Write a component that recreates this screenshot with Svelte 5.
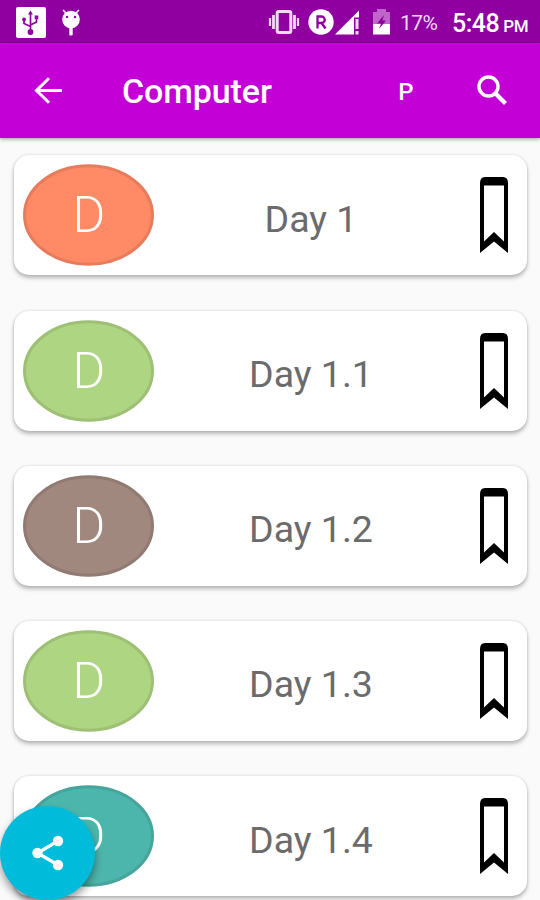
<script>
	const days = [
		{ name: 'Day 1', color: '#ff8a65', edge: '#e67c5b' },
		{ name: 'Day 1.1', color: '#aed581', edge: '#9dc074' },
		{ name: 'Day 1.2', color: '#a1887f', edge: '#917a72' },
		{ name: 'Day 1.3', color: '#aed581', edge: '#9dc074' },
		{ name: 'Day 1.4', color: '#4db6ac', edge: '#45a49b' }
	];
</script>

<div class="screen">
	<div class="status">
		<svg class="usb" width="30" height="31" viewBox="0 0 30 31">
			<rect width="30" height="31" rx="2" fill="#fff" />
			<g fill="none" stroke="#9000a0" stroke-width="1.7">
				<path d="M14.500 25V6M14.500 19.500L8 16.500V12M14.500 18L20.500 15V10" />
			</g>
			<g fill="#9000a0">
				<circle cx="14.500" cy="25" r="2.900" />
				<path d="M14.500 3.500l2.500 4h-5z" />
				<circle cx="8" cy="12.500" r="1.900" />
				<rect x="18.700" y="8.500" width="3.600" height="3.600" />
			</g>
		</svg>
		<svg class="droid" width="20" height="27" viewBox="0 0 20 27">
			<path d="M2 1l4 4M18 1l-4 4" stroke="#fff" stroke-width="1.6" />
			<circle cx="10" cy="10.5" r="8.8" fill="#fff" />
			<rect x="8.3" y="18" width="3.4" height="8.5" rx="1" fill="#fff" />
			<circle cx="6" cy="8" r="1.2" fill="#9000a0" />
			<circle cx="14" cy="8" r="1.2" fill="#9000a0" />
		</svg>
		<svg class="vibrate" width="32" height="24" viewBox="0 0 32 24" fill="none" stroke="#f3d9f6">
			<rect x="9.2" y="1.500" width="13.6" height="21" rx="1.5" stroke-width="3" />
			<path d="M5.5 5v14M26.5 5v14" stroke-width="2.800" />
			<path d="M2 8v8M30 8v8" stroke-width="2.200" />
		</svg>
		<svg class="roaming" width="26" height="26" viewBox="0 0 26 26">
			<circle cx="13" cy="13" r="12.7" fill="#fff" />
			<path d="M9.500 19.500V7.500h4a3.200 3.200 0 0 1 0 6.500h-4M13.500 14l4 5.500" fill="none" stroke="#9000a0" stroke-width="2.300" />
		</svg>
		<svg class="signal" width="24" height="25" viewBox="0 0 24 25" fill="#fff">
			<path d="M0 24.5L24 .5V7.500h-5v17z" />
			<path d="M20.500 9h3v10h-3zM20.500 21h3v3.500h-3z" fill="#f3d9f6" />
		</svg>
		<svg class="battery" width="17" height="26" viewBox="0 0 17 26">
			<path d="M0 3h4V0h9v3h4v13H0z" fill="#c065ca" />
			<path d="M0 15h17v10.500H0z" fill="#fff" />
			<path d="M11 6L4 14.500h4L6 20l7-8.500H9.500z" fill="#9000a0" />
		</svg>
		<span class="percent">17%</span>
		<span class="clock">5:48<small>PM</small></span>
	</div>

	<header>
		<svg class="back" width="28" height="27" viewBox="0 0 28 27" fill="none" stroke="#fff" stroke-width="3">
			<path d="M15 1.200L2.500 13.500L15 25.800M2.500 13.500H28" />
		</svg>
		<h1>Computer</h1>
		<span class="action">P</span>
		<svg class="search" width="31" height="31" viewBox="0 0 31 31" fill="none" stroke="#fff">
			<circle cx="11.500" cy="11.500" r="9.500" stroke-width="3.400" />
			<path d="M18 18L28.500 28.500" stroke-width="4.200" />
		</svg>
	</header>

	<main>
		{#each days as day}
			<article>
				<svg class="avatar" width="131" height="102" viewBox="0 0 131 102">
					<ellipse cx="65.5" cy="51" rx="64" ry="49.200" fill={day.color} stroke={day.edge} stroke-width="3" />
					<text x="66" y="68" text-anchor="middle">D</text>
				</svg>
				<span class="name">{day.name}</span>
				<svg class="bookmark" width="28" height="76" viewBox="0 0 28 76">
					<path fill-rule="evenodd" d="M0 76V6Q0 0 5 0H23Q28 0 28 6V76L14 64.500zM4 8.500V64.500L14 55L24 64.500V8.500z" />
				</svg>
			</article>
		{/each}
	</main>

	<button class="fab" aria-label="Share">
		<svg width="32" height="36" viewBox="0 0 32 36" fill="#fff">
			<path d="M26 6L5.500 18L26 30" fill="none" stroke="#fff" stroke-width="3.200" />
			<circle cx="26" cy="6" r="5.200" />
			<circle cx="5.500" cy="18" r="5.200" />
			<circle cx="26" cy="30" r="5.200" />
		</svg>
	</button>
</div>

<style>
	:global(body) {
		overflow: hidden;
	}

	.screen {
		position: relative;
		overflow: hidden;
		width: 540px;
		height: 900px;
		background: #fafafa;
		font-family: Roboto, sans-serif;
	}

	.status {
		display: flex;
		align-items: center;
		height: 42.5px;
		padding: 2px 12px 0 16px;
		box-sizing: border-box;
		background: #9000a0;
		color: #fff;
		white-space: nowrap;
	}

	svg {
		display: block;
		flex: none;
	}

	.droid {
		margin-left: 15px;
	}

	.vibrate {
		margin-left: 187px;
	}

	.roaming {
		margin-left: 8px;
	}

	.signal {
		margin-left: 1px;
	}

	.battery {
		margin-left: 14px;
	}

	.percent {
		width: 38px;
		margin: 2px 0 0 10px;
		color: #f3d9f6;
		font-size: 21px;
		letter-spacing: -0.5px;
	}

	.clock {
		margin: 2px 0 0 auto;
		font-size: 25px;
		font-weight: 500;
		letter-spacing: -0.5px;
	}

	small {
		margin-left: 4px;
		font-size: 17px;
	}

	header {
		position: relative;
		display: flex;
		align-items: center;
		height: 95.5px;
		padding: 0 32px 0 34px;
		box-sizing: border-box;
		background: #c300d6;
		box-shadow: 0 1px 4px rgba(0, 0, 0, 0.4);
		color: #fff;
	}

	h1 {
		margin: 1px 0 0 60px;
		font-size: 34px;
		font-weight: 500;
		letter-spacing: -0.1px;
	}

	.action {
		margin: 3px 63.5px 0 auto;
		font-size: 24px;
		font-weight: 500;
	}

	main {
		display: grid;
		gap: 35.2px;
		padding: 17.4px 13px 0 14px;
	}

	article {
		display: flex;
		align-items: center;
		height: 120px;
		padding: 0 19px 0 9px;
		box-sizing: border-box;
		border-radius: 15px;
		background: #fff;
		box-shadow:
			0 3px 4px rgba(0, 0, 0, 0.26),
			0 0 3px rgba(0, 0, 0, 0.14);
	}

	.avatar text {
		fill: #fff;
		font-size: 50px;
		font-weight: 300;
	}

	.name {
		flex: 1;
		margin-top: 7px;
		padding-left: 2px;
		color: #6b6b6b;
		font-size: 37.5px;
		text-align: center;
	}

	.bookmark {
		margin-left: 14px;
	}

	.fab {
		position: absolute;
		bottom: 0;
		left: 0;
		display: grid;
		place-items: center;
		width: 95px;
		height: 94px;
		padding: 0;
		border: none;
		border-radius: 50%;
		background: #00bcda;
		box-shadow: 0 5px 9px rgba(0, 0, 0, 0.4);
	}
</style>
